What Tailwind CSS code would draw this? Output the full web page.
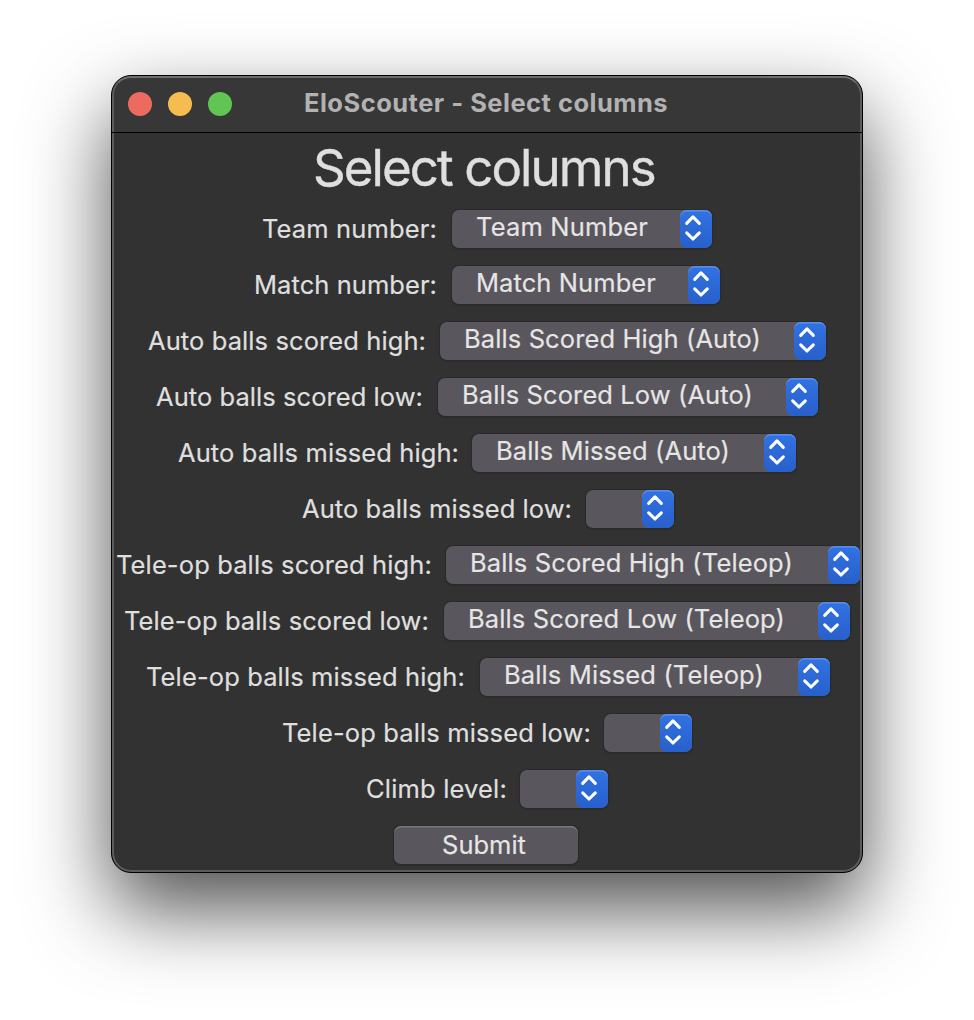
<!DOCTYPE html>
<html lang="en">
<head>
<meta charset="utf-8">
<title>EloScouter - Select columns</title>
<script src="https://cdn.jsdelivr.net/npm/@tailwindcss/browser@4"></script>
</head>
<body class="w-[974px] h-[1020px] overflow-hidden bg-white font-['Inter',sans-serif] text-[#dfdfdf]">
<main class="pt-[75px] pl-[111px]">
  <section class="relative w-[752px] h-[798px] rounded-[20px] border border-black bg-[#323232] overflow-hidden shadow-[0_36px_82px_rgba(0,0,0,0.69)]">
    <header class="h-[57px] bg-[#373737] border-b border-black flex items-center">
      <div class="flex gap-4 pl-4">
        <i class="size-6 rounded-full bg-[#ed6a5e]"></i>
        <i class="size-6 rounded-full bg-[#f5bd4f]"></i>
        <i class="size-6 rounded-full bg-[#61c554]"></i>
      </div>
      <div class="pl-[72px] -mt-[2px] whitespace-nowrap text-[25.5px] leading-[32px] font-bold text-[#b2b2b2] tracking-[0.48px]">EloScouter - Select columns</div>
    </header>
    <h1 class="h-[71px] pl-[201px] whitespace-nowrap text-[51px] leading-[70px] tracking-[-1.93px] [-webkit-text-stroke:0.4px_#dfdfdf]">Select columns</h1>
    <form id="rows" class="text-[25.5px] whitespace-nowrap [-webkit-text-stroke:0.2px_#dfdfdf]"></form>
    <div class="pl-[282px] mt-[6px]"><button type="button" class="block w-[184px] h-[38px] rounded-[7px] bg-[#5a565d] pr-[4px] text-center text-[25.5px] leading-[38px] text-[#e6e6e6] [-webkit-text-stroke:0.2px_#dfdfdf] shadow-[inset_0_1.5px_0_#7b787e,0_0_0_1px_#2a2a2a,0_1px_2px_#222]">Submit</button></div>
    <div class="absolute inset-0 rounded-[19px] border-2 border-[#5c5c5c] border-t-[#6e6e6e] pointer-events-none"></div>
    <div class="absolute inset-x-0 top-[56px] h-px bg-black"></div>
  </section>
</main>
<template id="row">
  <div class="flex h-[56px] items-start pt-[6px]">
    <div class="shrink-0 leading-[38px] label"><span></span></div>
    <div class="shrink-0 flex justify-between h-[38px] rounded-[7px] bg-[#5a565d] shadow-[0_0_0_1px_#2a2a2a,0_1px_2px_#222] select">
      <div class="pl-[24px] leading-[34px] text-[#e6e6e6]"><span></span></div>
      <svg class="shrink-0 w-8 h-[38px] rounded-[7px] bg-linear-to-b from-[#3172e2] to-[#2860cb] shadow-[inset_0_1.5px_0_#5b8fe8]" viewBox="0 0 32 38" fill="none" stroke="#fff" stroke-width="3.1" stroke-linecap="round" stroke-linejoin="round"><path d="M6.700 13.300 13 6.900l6.300 6.400M6.700 22.800 13 29l6.300-6.200"/></svg>
    </div>
  </div>
</template>
<script>
// label, label x, menu left, menu right, value, label end, value end
const rows = [
 ["Team number:",263,452,712,"Team Number",436,647],
 ["Match number:",255,452,720,"Match Number",436,655],
 ["Auto balls scored high:",149,440,826,"Balls Scored High (Auto)",425,760],
 ["Auto balls scored low:",157,438,818,"Balls Scored Low (Auto)",422,752],
 ["Auto balls missed high:",179,472,796,"Balls Missed (Auto)",458,729],
 ["Auto balls missed low:",303,586,674,"",571,0],
 ["Tele-op balls scored high:",117,446,860,"Balls Scored High (Teleop)",431,792],
 ["Tele-op balls scored low:",125,444,850,"Balls Scored Low (Teleop)",428,784],
 ["Tele-op balls missed high:",147,480,830,"Balls Missed (Teleop)",464,763],
 ["Tele-op balls missed low:",283,604,692,"",590,0],
 ["Climb level:",367,520,608,"",506,0]
];
const ctx = document.createElement("canvas").getContext("2d");
ctx.font = "25.5px Inter";
const fit = (el, w) => {
  const t = el.textContent;
  if (t) el.style.letterSpacing = (w - ctx.measureText(t).width) / t.length + "px";
};
const form = document.getElementById("rows"), tpl = document.getElementById("row");
for (const [name, x, sx, ex, value, nameEnd, valueEnd] of rows) {
  const r = tpl.content.firstElementChild.cloneNode(true);
  const [a, b] = r.querySelectorAll("span");
  a.textContent = name; b.textContent = value;
  r.style.paddingLeft = x - 113 + "px";
  r.querySelector(".label").style.width = sx - x + 1 + "px";
  r.querySelector(".select").style.width = ex - sx + "px";
  form.append(r);
  fit(a, nameEnd - x + 2);
  fit(b, valueEnd - sx - 24 + 1);
}
</script>
</body>
</html>
